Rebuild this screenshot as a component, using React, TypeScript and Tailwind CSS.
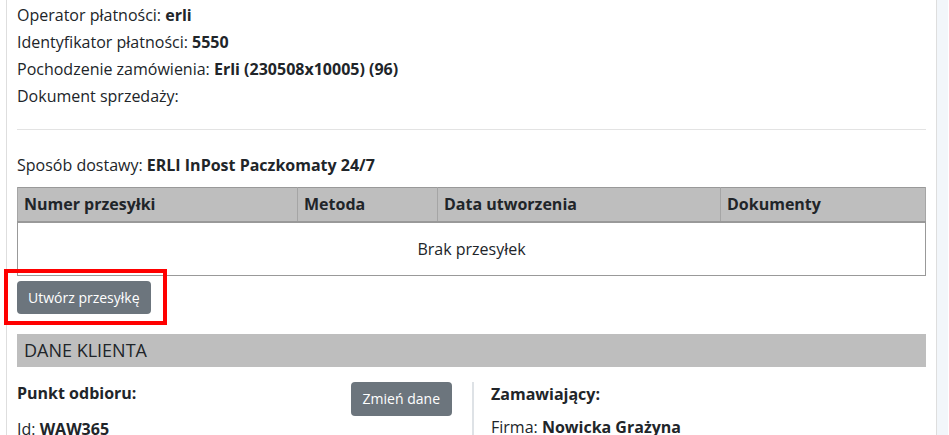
const COLS = [
  { label: 'Numer przesyłki', w: 'w-[280px]' },
  { label: 'Metoda', w: 'w-[140px]' },
  { label: 'Data utworzenia', w: 'w-[283px]' },
  { label: 'Dokumenty', w: '' },
]

function Line({ label, value }: { label: string; value?: string }) {
  return (
    <div className="leading-[27px]">
      {label}: {value && <b className="font-bold">{value}</b>}
    </div>
  )
}

export default function App() {
  return (
    <div
      className="flex w-[949px] h-[435px] overflow-hidden bg-white text-[16px] text-[#212529]"
      style={{ fontFamily: '"Open Sans", "Noto Sans", sans-serif' }}
    >
      <div className="relative ml-[6px] w-[931px] shrink-0 border-x border-[#dedede] px-[10px]">
        <div className="pt-[2px]">
          <Line label="Operator płatności" value="erli" />
          <Line label="Identyfikator płatności" value="5550" />
          <Line label="Pochodzenie zamówienia" value="Erli (230508x10005) (96)" />
          <Line label="Dokument sprzedaży" />
        </div>

        <hr className="mt-[19px] mb-[22px] border-0 border-t border-[#e3e3e3]" />

        <Line label="Sposób dostawy" value="ERLI InPost Paczkomaty 24/7" />

        <table className="mt-[8px] w-full border-collapse border border-[#999]">
          <thead>
            <tr className="bg-[#bebebe] border-b-2 border-[#999]">
              {COLS.map(c => (
                <th key={c.label} className={`${c.w} h-[34px] px-[6px] text-left font-bold border-x border-[#a5a5a5]`}>
                  {c.label}
                </th>
              ))}
            </tr>
          </thead>
          <tbody>
            <tr>
              <td colSpan={4} className="h-[54px] text-center">Brak przesyłek</td>
            </tr>
          </tbody>
        </table>

        <button className="mt-[5px] h-[33px] rounded-[4px] bg-[#6c757d] px-[11px] text-[14px] leading-[21px] text-white">
          Utwórz przesyłkę
        </button>

        <div className="mt-[20px] h-[33px] bg-[#bebebe] pl-[7px] text-[18px] leading-[33px]">DANE KLIENTA</div>

        <div className="mt-[14px] flex">
          <div className="flex w-[445px] items-start justify-between pr-[10px]">
            <div>
              <div className="font-bold leading-[24px]">Punkt odbioru:</div>
              <div className="mt-[12px] leading-[24px]">
                Id: <b className="font-bold">WAW365</b>
              </div>
            </div>
            <button className="mt-[1px] h-[34px] rounded-[4px] bg-[#6c757d] px-[12px] text-[14px] leading-[22px] text-white">
              Zmień dane
            </button>
          </div>
          <div className="ml-[10px] mt-[1px] border-l-2 border-[#dee2e6] pl-[17px]">
            <div className="font-bold leading-[24px]">Zamawiający:</div>
            <div className="mt-[9px] leading-[24px]">
              Firma: <b className="font-bold">Nowicka Grażyna</b>
            </div>
          </div>
        </div>

        <div className="absolute left-[-3px] top-[269px] h-[56px] w-[163px] border-4 border-[#ff0000]" />
      </div>
      <div className="w-[11px] shrink-0 bg-[#f2f6fa]" />
    </div>
  )
}
